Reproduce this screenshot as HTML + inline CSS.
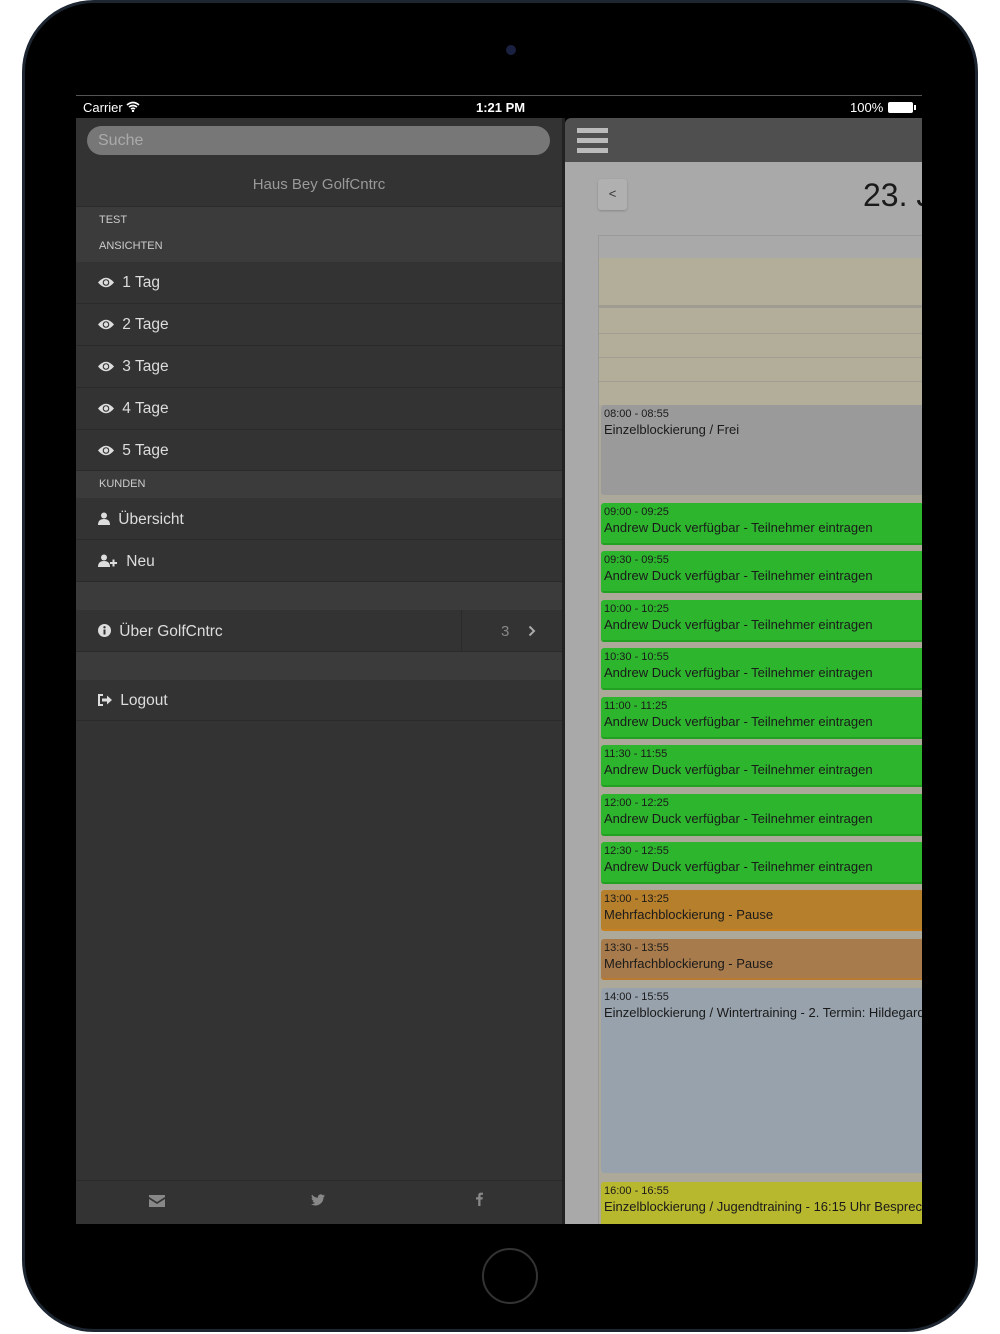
<!DOCTYPE html>
<html><head><meta charset="utf-8"><style>
*{margin:0;padding:0;box-sizing:border-box}
body{width:1000px;height:1334px;background:#fff;position:relative;overflow:hidden;font-family:"Liberation Sans",sans-serif}
.dev{position:absolute;left:22px;top:0;width:956px;height:1332px;background:#000;border-radius:72px;border:3px solid #1c2530}
.a{position:absolute}
.scr{position:absolute;left:76px;top:95px;width:846px;height:1129px;background:#000;overflow:hidden}
.side{position:absolute;left:0;top:23px;width:486px;height:1106px;background:#333}
.row{position:absolute;left:0;width:486px;color:#ddd;font-size:15.5px;border-bottom:1px solid #2a2a2a}
.row svg{vertical-align:-1px;margin-right:4px}
.hdr{position:absolute;left:0;width:486px;background:#3b3b3b;color:#ccc;font-size:11px;padding-left:23px}
.ev{position:absolute;left:525px;width:330px;border-radius:3px;color:#1a1a1a;padding-left:3px;white-space:nowrap;overflow:hidden}
.ev .t{font-size:11px;margin-top:3px}
.ev .d{font-size:13px;margin-top:2px}
.g{background:#2eb52e;border-bottom:2px solid #22a022;height:42px}
</style></head><body>
<div class="dev"></div>
<div class="a" style="left:482px;top:1248px;width:56px;height:56px;border-radius:50%;border:2px solid #333"></div>
<div class="a" style="left:506px;top:45px;width:10px;height:10px;border-radius:50%;background:#1a2040"></div>
<svg width="0" height="0" style="position:absolute"><defs><symbol id="eye" viewBox="0 0 16 11"><path d="M0 5.5Q8-4 16 5.5Q8 15 0 5.5Z" fill="#ddd"/><circle cx="8" cy="5.5" r="3.3" fill="#333"/><circle cx="8" cy="5.5" r="2.2" fill="#ddd"/></symbol></defs></svg>
<div class="scr">
 <div class="a" style="left:0;top:0;width:846px;height:1px;background:#555"></div>
 <div class="a" style="left:7px;top:5px;color:#fff;font-size:13px">Carrier <svg width="14" height="11" viewBox="0 0 14 11"><path d="M1 4Q7-1 13 4M3 6Q7 3 11 6M5 8Q7 6.5 9 8" stroke="#fff" stroke-width="1.6" fill="none"/><circle cx="7" cy="10" r="1.2" fill="#fff"/></svg></div>
 <div class="a" style="left:400px;top:5px;color:#fff;font-size:13px;font-weight:bold">1:21 PM</div>
 <div class="a" style="left:774px;top:5px;color:#fff;font-size:13px">100%</div>
 <div class="a" style="left:812px;top:7px;width:25px;height:11px;background:#fff;border-radius:2px"></div>
 <div class="a" style="left:838px;top:10px;width:2px;height:5px;background:#fff"></div>
 <div class="side">
  <div class="a" style="left:11px;top:8px;width:463px;height:29px;border-radius:15px;background:#777;color:#aaa;font-size:16px;padding:6px 11px">Suche</div>
  <div class="a" style="left:0;top:58px;width:486px;text-align:center;color:#999;font-size:15px">Haus Bey GolfCntrc</div>
  <div class="hdr" style="top:88px;height:56px;border-top:1px solid #2b2b2b"><div style="margin-top:7px">TEST</div><div style="margin-top:14px">ANSICHTEN</div></div>
  <div class="row" style="top:144px;height:42px;padding:12px 0 0 22px"><svg width="16" height="11"><use href="#eye"/></svg> 1 Tag</div>
  <div class="row" style="top:186px;height:42px;padding:12px 0 0 22px"><svg width="16" height="11"><use href="#eye"/></svg> 2 Tage</div>
  <div class="row" style="top:228px;height:42px;padding:12px 0 0 22px"><svg width="16" height="11"><use href="#eye"/></svg> 3 Tage</div>
  <div class="row" style="top:270px;height:42px;padding:12px 0 0 22px"><svg width="16" height="11"><use href="#eye"/></svg> 4 Tage</div>
  <div class="row" style="top:312px;height:41px;padding:12px 0 0 22px"><svg width="16" height="11"><use href="#eye"/></svg> 5 Tage</div>
  <div class="hdr" style="top:353px;height:27px;padding-top:7px">KUNDEN</div>
  <div class="row" style="top:380px;height:42px;padding:13px 0 0 22px"><svg width="12" height="13" viewBox="0 0 12 13"><circle cx="6" cy="3.5" r="3" fill="#ddd"/><path d="M0 13Q0 7 6 7Q12 7 12 13Z" fill="#ddd"/></svg> Übersicht</div>
  <div class="row" style="top:422px;height:42px;padding:13px 0 0 22px"><svg width="20" height="13" viewBox="0 0 20 13"><circle cx="6" cy="3.5" r="3" fill="#ddd"/><path d="M0 13Q0 7 6 7Q12 7 12 13Z" fill="#ddd"/><path d="M12 9h7M15.5 5.5v7" stroke="#ddd" stroke-width="2"/></svg> Neu</div>
  <div class="a" style="left:0;top:464px;width:486px;height:28px;background:#3b3b3b"></div>
  <div class="row" style="top:492px;height:42px;padding:13px 0 0 22px"><svg width="13" height="13" viewBox="0 0 13 13"><circle cx="6.5" cy="6.5" r="6.5" fill="#ddd"/><rect x="5.5" y="5.5" width="2" height="5" fill="#333"/><circle cx="6.5" cy="3.3" r="1.2" fill="#333"/></svg> Über GolfCntrc</div>
  <div class="a" style="left:385px;top:492px;width:1px;height:42px;background:#2a2a2a"></div>
  <div class="a" style="left:425px;top:505px;color:#888;font-size:15px">3</div>
  <svg class="a" style="left:452px;top:507px" width="8" height="12" viewBox="0 0 8 12"><path d="M1.5 1.5l4.5 4.5-4.5 4.5" stroke="#aaa" stroke-width="2" fill="none"/></svg>
  <div class="a" style="left:0;top:534px;width:486px;height:28px;background:#3b3b3b"></div>
  <div class="row" style="top:562px;height:41px;padding:12px 0 0 22px"><svg width="14" height="12" viewBox="0 0 14 12"><path d="M5 1H1v10h4" stroke="#ddd" stroke-width="2" fill="none"/><path d="M4 4.5h5V1.5l5 4.5-5 4.5v-3H4z" fill="#ddd"/></svg> Logout</div>
  <div class="a" style="left:0;top:1062px;width:486px;height:1px;background:#2a2a2a"></div>
  <svg class="a" style="left:73px;top:1077px" width="16" height="12" viewBox="0 0 16 12"><path d="M0 0h16v2L8 7 0 2z M0 4l8 5 8-5v8H0z" fill="#888"/></svg>
  <svg class="a" style="left:235px;top:1076px" width="14" height="12" viewBox="0 0 14 12"><path d="M14 1.5q-.8.4-1.6.5.9-.6 1.2-1.5-.8.5-1.8.7A2.8 2.8 0 0 0 7 3.7 8 8 0 0 1 1 .6a2.8 2.8 0 0 0 .9 3.8q-.6 0-1.3-.4 0 2.2 2.3 2.8-.6.2-1.3.1.6 1.9 2.6 2A5.7 5.7 0 0 1 0 10.1 8 8 0 0 0 12.5 3.3q.9-.7 1.5-1.8z" fill="#888"/></svg>
  <svg class="a" style="left:400px;top:1074px" width="7" height="14" viewBox="0 0 7 14"><path d="M4.5 14V7.5h2l.3-2.3H4.5V3.8q0-1 1-1H7V.7Q6 .6 5 .6 2.2.6 2.2 3.4v1.8H0v2.3h2.2V14z" fill="#888"/></svg>
 </div>
 <div class="a" style="left:486px;top:23px;width:3px;height:1106px;background:#222"></div>
 <div class="a" style="left:489px;top:23px;width:357px;height:44px;background:#4f4f4f;border-top-left-radius:6px"></div>
 <div class="a" style="left:501px;top:33px;width:31px;height:5px;background:#bbb"></div>
 <div class="a" style="left:501px;top:43px;width:31px;height:5px;background:#bbb"></div>
 <div class="a" style="left:501px;top:53px;width:31px;height:5px;background:#bbb"></div>
 <div class="a" style="left:489px;top:67px;width:357px;height:1062px;background:#a9a9a9"></div>
 <div class="a" style="left:522px;top:84px;width:29px;height:31px;background:#b0b0b0;border-radius:3px;box-shadow:0 1px 2px #888;color:#333;font-size:13px;text-align:center;line-height:29px">&lt;</div>
 <div class="a" style="left:787px;top:82px;color:#1a1a1a;font-size:32px;white-space:nowrap">23. J</div>
 <div class="a" style="left:522px;top:140px;width:324px;height:1px;background:#999"></div>
 <div class="a" style="left:522px;top:140px;width:1px;height:990px;background:#999"></div>
 <div class="a" style="left:523px;top:163px;width:323px;height:966px;background:#aca99b"></div>
 <div class="a" style="left:523px;top:163px;width:323px;height:147px;background:#b3ae99"></div>
 <div class="a" style="left:523px;top:210px;width:323px;height:3px;background:#9f9d93"></div>
 <div class="a" style="left:523px;top:238px;width:323px;height:1px;background:#a09e92"></div>
 <div class="a" style="left:523px;top:262px;width:323px;height:1px;background:#a09e92"></div>
 <div class="a" style="left:523px;top:286px;width:323px;height:1px;background:#a09e92"></div>
 <div class="ev" style="top:310px;height:90px;background:#9a9a9a"><div class="t">08:00 - 08:55</div><div class="d">Einzelblockierung / Frei</div></div>
 <div class="ev g" style="top:408px"><div class="t">09:00 - 09:25</div><div class="d">Andrew Duck verfügbar - Teilnehmer eintragen</div></div>
 <div class="ev g" style="top:456px"><div class="t">09:30 - 09:55</div><div class="d">Andrew Duck verfügbar - Teilnehmer eintragen</div></div>
 <div class="ev g" style="top:505px"><div class="t">10:00 - 10:25</div><div class="d">Andrew Duck verfügbar - Teilnehmer eintragen</div></div>
 <div class="ev g" style="top:553px"><div class="t">10:30 - 10:55</div><div class="d">Andrew Duck verfügbar - Teilnehmer eintragen</div></div>
 <div class="ev g" style="top:602px"><div class="t">11:00 - 11:25</div><div class="d">Andrew Duck verfügbar - Teilnehmer eintragen</div></div>
 <div class="ev g" style="top:650px"><div class="t">11:30 - 11:55</div><div class="d">Andrew Duck verfügbar - Teilnehmer eintragen</div></div>
 <div class="ev g" style="top:699px"><div class="t">12:00 - 12:25</div><div class="d">Andrew Duck verfügbar - Teilnehmer eintragen</div></div>
 <div class="ev g" style="top:747px"><div class="t">12:30 - 12:55</div><div class="d">Andrew Duck verfügbar - Teilnehmer eintragen</div></div>
 <div class="ev" style="top:795px;height:41px;background:#b67f2c;border-bottom:2px solid #c88020"><div class="t">13:00 - 13:25</div><div class="d">Mehrfachblockierung - Pause</div></div>
 <div class="ev" style="top:844px;height:41px;background:#a87b4c;border-bottom:2px solid #b87a30"><div class="t">13:30 - 13:55</div><div class="d">Mehrfachblockierung - Pause</div></div>
 <div class="ev" style="top:893px;height:185px;background:#98a2ac"><div class="t">14:00 - 15:55</div><div class="d">Einzelblockierung / Wintertraining - 2. Termin: Hildegard</div></div>
 <div class="ev" style="top:1087px;height:45px;background:#b8b82e"><div class="t">16:00 - 16:55</div><div class="d">Einzelblockierung / Jugendtraining - 16:15 Uhr Besprechung</div></div>
</div>
</body></html>
